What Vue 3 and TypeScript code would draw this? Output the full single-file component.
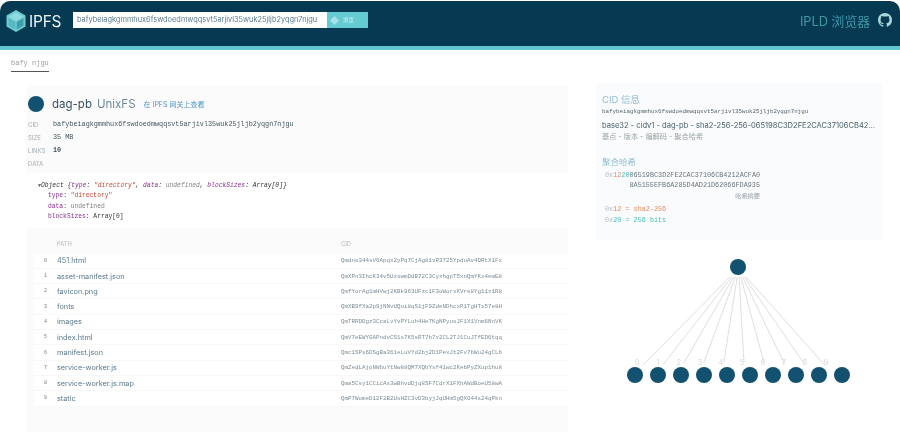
<script setup lang="ts">
const cid = "bafybeiagkgmmhux6fswdoedmwqqsvt5arjivl35wuk25jljb2yqgn7njgu";

const links = [
  { path: "451.html", cid: "Qmdno344sV6Apqx2yPq7CjAg81vR3725YpduAv4DRtX1Fx" },
  { path: "asset-manifest.json", cid: "QmXPn3IhcK34v5UxswmDdB72C3CyzhgpT5xnQmYKx4emE8" },
  { path: "favicon.png", cid: "QmfYorAg1mHVwj2KBk963UFzc1F3oWorxKVre8Yg11z1R8" },
  { path: "fonts", cid: "QmXB9fXa2p9jNNvUQui8qS1jF9ZdeNDhcxP1TgHTs57e8H" },
  { path: "images", cid: "QmTRRDDgz3CcaLvYvPYLuh4He7KgNPyusJF1X1Vnm6NnVK" },
  { path: "index.html", cid: "QmV7eEWYGAPndvCS1s7K5sRT7b7x2CL2TJ1CuJTfED6tqq" },
  { path: "manifest.json", cid: "Qmc1SPs6DSgBa361eLuVYd2bj2D1PexJt2Fv7bWu24gCLb" },
  { path: "service-worker.js", cid: "QmZedLAjpNWbuYtNw88QM7XQbYsf41wc2KebPyZXup1hu8" },
  { path: "service-worker.js.map", cid: "Qma5Csy1CCicAs3wBhvdDjq8SF7CdrX1FXhAWdBoeU58wA" },
  { path: "static", cid: "QmP7WomeD12F2B2UsHZC3vD3byjJqUHm5gQX044s24qPkn" },
];

// graph is drawn in its own coordinates, svg starts at x=596 y=245
const nodes = links.map((_, i) => ({
  i,
  cx: 39 + i * 23,
  x1: 134 + i * 1.8,
  x2: 47 + i * 20.2,
  y2: 120 - (4.5 - Math.abs(i - 4.5)) * 0.6,
  lx: 41 + i * 21,
}));
</script>

<template>
  <div class="page">
    <header class="top">
      <div class="brand">
        <svg class="logo" viewBox="0 0 20 22" width="20" height="22">
          <polygon points="10,0 19.5,5.5 19.5,16.5 10,22 0.5,16.5 0.5,5.5" fill="#6ecad1" />
          <polygon points="10,2.5 17.5,6.8 10,11 2.5,6.8" fill="#8fdadf" />
          <polygon points="2.5,8 9.3,12 9.3,19.6 2.5,15.4" fill="#56b8c1" />
          <polygon points="10.7,12 17.5,8 17.5,15.4 10.7,19.6" fill="#3f9fab" />
        </svg>
        <span class="brand-name">IPFS</span>
      </div>
      <div class="search">
        <div class="search-input">{{ cid }}</div>
        <div class="search-btn">
          <svg viewBox="0 0 12 12" width="9" height="9">
            <polygon points="6,0 12,6 6,12 0,6" fill="#a5e3e7" />
          </svg>
          <span>浏览</span>
        </div>
      </div>
      <div class="top-right">
        <span class="ipld">IPLD 浏览器</span>
        <svg viewBox="0 0 16 16" width="14" height="14">
          <path
            fill="#a9d6da"
            d="M8 0C3.58 0 0 3.58 0 8c0 3.54 2.29 6.53 5.47 7.59.4.07.55-.17.55-.38 0-.19-.01-.82-.01-1.49-2.01.37-2.53-.49-2.69-.94-.09-.23-.48-.94-.82-1.13-.28-.15-.68-.52-.01-.53.63-.01 1.08.58 1.23.82.72 1.21 1.87.87 2.33.66.07-.52.28-.87.51-1.07-1.78-.2-3.64-.89-3.64-3.95 0-.87.31-1.59.82-2.15-.08-.2-.36-1.02.08-2.12 0 0 .67-.21 2.2.82.64-.18 1.32-.27 2-.27s1.36.09 2 .27c1.53-1.04 2.2-.82 2.2-.82.44 1.1.16 1.92.08 2.12.51.56.82 1.27.82 2.15 0 3.07-1.87 3.75-3.65 3.95.29.25.54.73.54 1.48 0 1.07-.01 1.93-.01 2.2 0 .21.15.46.55.38A8.01 8.01 0 0 0 16 8c0-4.42-3.58-8-8-8z"
          />
        </svg>
      </div>
    </header>

    <nav class="crumbs"><span class="crumb">bafy njgu</span></nav>

    <main class="content">
      <section class="node-panel">
        <div class="node-title">
          <span class="dot"></span>
          <span class="codec">dag-pb</span>
          <span class="unixfs">UnixFS</span>
          <span class="gateway">在 IPFS 网关上查看</span>
        </div>
        <dl class="meta">
          <dt>CID</dt><dd>{{ cid }}</dd>
          <dt>SIZE</dt><dd>35 MB</dd>
          <dt>LINKS</dt><dd><b>10</b></dd>
          <dt>DATA</dt><dd></dd>
        </dl>
        <div class="inspector">
          <div class="ins-head">
            <span class="arrow">▼</span><i>Object {<span class="k">type</span>: <span class="s">"directory"</span>, <span class="k">data</span>: <span class="u">undefined</span>, <span class="k">blockSizes</span>: Array[0]}</i>
          </div>
          <div class="ins-row"><span class="k">type</span>: <span class="s">"directory"</span></div>
          <div class="ins-row"><span class="k">data</span>: <span class="u">undefined</span></div>
          <div class="ins-row"><span class="k">blockSizes</span>: Array[0]</div>
        </div>
        <div class="links">
          <div class="link-head">
            <span class="idx"></span>
            <span class="path">PATH</span>
            <span class="cid">CID</span>
          </div>
          <div v-for="(l, i) in links" :key="l.cid" class="link-row">
            <span class="idx">{{ i }}</span>
            <span class="path">{{ l.path }}</span>
            <span class="cid">{{ l.cid }}</span>
          </div>
        </div>
      </section>

      <aside class="side">
        <section class="cid-panel">
          <h4>CID 信息</h4>
          <div class="cid-mono">{{ cid }}</div>
          <div class="cid-parts">base32 - cidv1 - dag-pb - sha2-256-256-065198C3D2FE2CAC37106CB42...</div>
          <div class="cid-labels">基点 - 版本 - 编解码 - 聚合哈希</div>
          <h4 class="mh">聚合哈希</h4>
          <div class="hash">
            <div><span class="mute">0x</span><span class="or">12</span><span class="te">20</span>06519BC3D2FE2CAC37106CB4212ACFA0</div>
            <div>8A5155EFB6A285D4AD21D62066FDA935</div>
            <div class="digest">哈希摘要</div>
          </div>
          <div class="codes">
            <div class="or"><span class="mute">0x</span>12 = sha2-256</div>
            <div class="te"><span class="mute">0x</span>20 = 256 bits</div>
          </div>
        </section>
        <svg class="graph" viewBox="0 0 286 145" width="286" height="145">
          <line
            v-for="n in nodes"
            :key="'l' + n.i"
            :x1="n.x1"
            y1="32"
            :x2="n.x2"
            :y2="n.y2"
            stroke="#d8d4d8"
            stroke-width="0.8"
          />
          <circle cx="142" cy="22" r="8" fill="#125270" />
          <template v-for="n in nodes" :key="n.i">
            <text :x="n.lx" y="120" class="glabel" text-anchor="middle">{{ n.i }}</text>
            <circle :cx="n.cx" cy="130" r="8" fill="#125270" />
          </template>
        </svg>
      </aside>
    </main>
  </div>
</template>

<style scoped>
.page {
  width: 900px;
  height: 441px;
  overflow: hidden;
  background: #fff;
  font-family: Inter, "Noto Sans CJK SC", sans-serif;
  filter: blur(0.45px);
}

.top {
  display: flex;
  align-items: center;
  height: 49px;
  margin-top: 1px;
  padding: 0 8px 5px 6px;
  box-sizing: border-box;
  background: #053a52;
  border-bottom: 4px solid #63c6cc;
  border-radius: 10px 10px 0 0;
}

.brand {
  display: flex;
  align-items: center;
  gap: 3px;
  width: 67px;
}

.brand-name {
  color: #f0f6f8;
  font-size: 15.5px;
  letter-spacing: -0.2px;
}

.search {
  display: flex;
  height: 16px;
  margin-top: -2px;
}

.search-input {
  width: 254px;
  padding-left: 4px;
  box-sizing: border-box;
  background: #fff;
  color: #5d7c8c;
  font-size: 7.4px;
  line-height: 16px;
  white-space: nowrap;
  overflow: hidden;
}

.search-btn {
  display: flex;
  align-items: center;
  gap: 4px;
  width: 41px;
  padding-left: 3px;
  box-sizing: border-box;
  background: #64cbd3;
  color: #d9f4f6;
  font-size: 5.5px;
}

.top-right {
  display: flex;
  align-items: center;
  gap: 8px;
  margin-left: auto;
  margin-top: -2px;
}

.ipld {
  color: #3f97a8;
  font-size: 12.8px;
}

.crumbs {
  display: flex;
  align-items: flex-start;
  height: 21px;
  padding: 9px 0 0 11px;
  box-sizing: border-box;
}

.crumb {
  height: 12px;
  border-bottom: 1px solid #555;
  color: #9a9f9f;
  font-family: "Liberation Mono", monospace;
  font-size: 7px;
  line-height: 8px;
}

.content {
  display: flex;
  gap: 28px;
  margin: 14px 0 0 26px;
}

.node-panel {
  width: 542px;
  height: 347px;
  padding-top: 11px;
  box-sizing: border-box;
  background: #fbfbfb;
}

.node-title {
  display: flex;
  align-items: center;
  height: 16px;
  padding-left: 2px;
}

.dot {
  width: 16px;
  height: 16px;
  margin-right: 8px;
  border-radius: 50%;
  background: #125270;
}

.codec {
  margin-right: 5px;
  color: #37525f;
  font-size: 11.5px;
}

.unixfs {
  margin-right: 8px;
  color: #6d8b9a;
  font-size: 11.5px;
}

.gateway {
  color: #4f96c6;
  font-size: 7px;
}

.meta {
  display: grid;
  grid-template-columns: 25px 1fr;
  grid-auto-rows: 13px;
  margin: 5.5px 0 0 2px;
  align-items: center;
}

.meta dt {
  color: #a5adb1;
  font-size: 6px;
}

.meta dd {
  margin: 0;
  color: #45575f;
  font-family: "Liberation Mono", monospace;
  font-size: 6.8px;
}

.inspector {
  margin-top: 3.5px;
  padding: 8px 0 6px 12px;
  background: #fff;
  color: #333;
  font-family: "Liberation Mono", monospace;
  font-size: 6.3px;
  line-height: 10.3px;
}

.arrow {
  font-size: 5px;
  color: #555;
}

.ins-row {
  padding-left: 10px;
}

.k {
  color: #8a2f92;
}

.s {
  color: #c4493a;
}

.u {
  color: #808080;
}

.links {
  margin: 5px 0 0 8px;
}

.link-head,
.link-row {
  display: flex;
  align-items: center;
}

.link-head {
  height: 19.4px;
  padding-top: 1px;
  color: #b4b9bc;
}

.link-row {
  height: 15.3px;
  background: #fff;
  border-bottom: 1px solid #f8f8f8;
  box-sizing: border-box;
}

.idx {
  width: 23px;
  padding-left: 10px;
  box-sizing: border-box;
  color: #6b7c85;
  font-family: "Liberation Mono", monospace;
  font-size: 5px;
}

.path {
  width: 284px;
  color: #5a7a8c;
  font-size: 7.3px;
}

.link-head .path,
.link-head .cid {
  color: #b4b9bc;
  font-family: Inter, sans-serif;
  font-size: 5.8px;
}

.cid {
  color: #7b8b94;
  font-family: "Liberation Mono", monospace;
  font-size: 5.83px;
  white-space: nowrap;
}

.side {
  width: 286px;
  margin-top: -2px;
}

.cid-panel {
  height: 157px;
  padding: 11px 0 0 6px;
  box-sizing: border-box;
  background: #fafbfc;
}

h4 {
  margin: 0;
  color: #8fbdd0;
  font-size: 9.5px;
  font-weight: 400;
  line-height: 12px;
}

.cid-mono {
  margin-top: 1px;
  color: #56656d;
  font-family: "Liberation Mono", monospace;
  font-size: 5.83px;
  line-height: 10px;
}

.cid-parts {
  margin-top: 3px;
  color: #49606c;
  font-size: 7.55px;
  line-height: 11px;
  white-space: nowrap;
}

.cid-labels {
  margin-top: 1px;
  color: #9aa5ab;
  font-size: 7.2px;
  line-height: 10px;
}

.mh {
  margin-top: 14px;
  font-size: 8.5px;
}

.hash {
  width: 155px;
  margin: 3px 0 0 3px;
  color: #677780;
  font-family: "Liberation Mono", monospace;
  font-size: 6.8px;
  line-height: 9.5px;
  text-align: right;
}

.digest {
  color: #9aa5ab;
  font-family: Inter, "Noto Sans CJK SC", sans-serif;
  font-size: 6.2px;
  line-height: 11px;
}

.codes {
  margin: 3px 0 0 3px;
  font-family: "Liberation Mono", monospace;
  font-size: 6.8px;
  line-height: 11px;
}

.mute {
  color: #b4bcc0;
}

.or {
  color: #e58a66;
}

.te {
  color: #45bdb5;
}

.graph {
  display: block;
  margin-top: 5px;
}

.glabel {
  fill: #d5d5d8;
  font-family: Inter, sans-serif;
  font-size: 7px;
}
</style>
